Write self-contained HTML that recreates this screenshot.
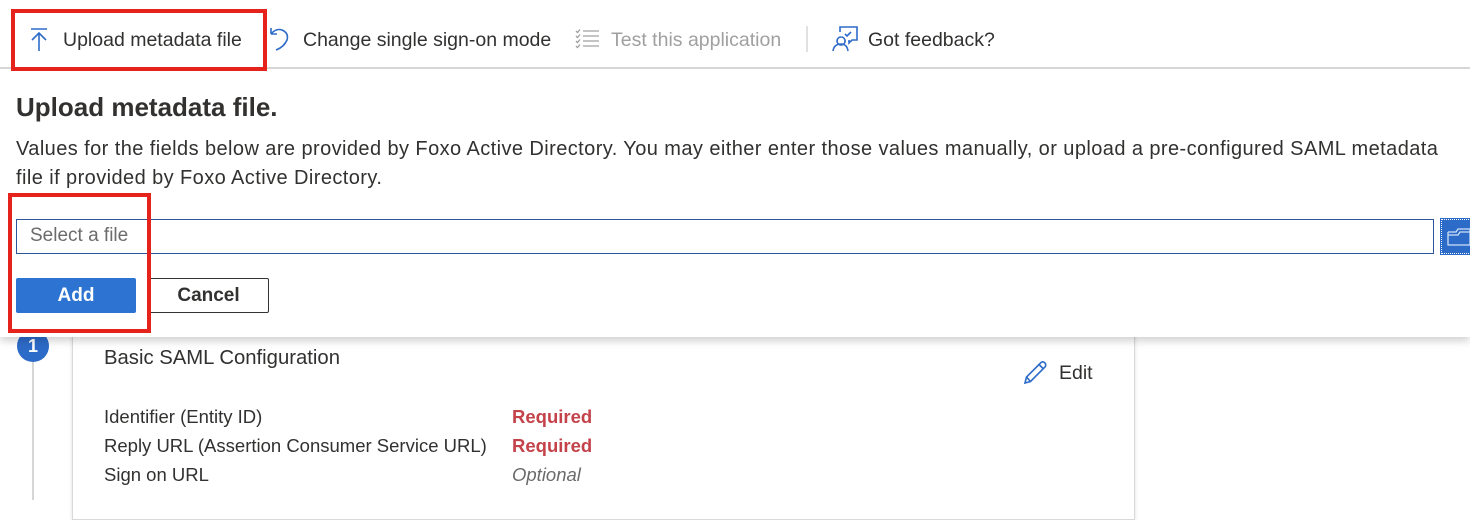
<!DOCTYPE html>
<html><head><style>
*{margin:0;padding:0;box-sizing:border-box}
body{width:1470px;height:495px;overflow:hidden;background:#fff;font-family:"Liberation Sans",sans-serif;color:#323130;position:relative}
.a{position:absolute;white-space:nowrap}
</style></head><body>
<div class="a" style="left:32px;top:330px;width:2px;height:170px;background:#d6d6d6"></div>
<div class="a" style="left:17px;top:330px;width:32px;height:32px;border-radius:50%;background:#2d6bc8;color:#fff;font-weight:bold;font-size:18px;text-align:center;line-height:32px">1</div>
<div class="a" style="left:72px;top:320px;width:1063px;height:200px;border:1px solid #d9d9d9;box-shadow:0 1px 4px rgba(0,0,0,.12);background:#fff"></div>
<div class="a" style="left:104px;top:347px;font-size:20.3px">Basic SAML Configuration</div>
<svg class="a" style="left:1022px;top:360px" width="26" height="26" viewBox="0 0 26 26"><path d="M3 23 L4.5 17 L19 2.5 Q21 1 23 3 Q24.5 5 23 7 L8.5 21.5 Z M4.5 17 L8.5 21.5 M17 4.5 L21 8.5" fill="none" stroke="#2d6bc8" stroke-width="1.6"/></svg>
<div class="a" style="left:1059px;top:362px;font-size:19.5px">Edit</div>
<div class="a" style="left:104px;top:402px;font-size:18.5px;line-height:29px">Identifier (Entity ID)<br>Reply URL (Assertion Consumer Service URL)<br>Sign on URL</div>
<div class="a" style="left:512px;top:402px;font-size:18.5px;line-height:29px;color:#c4434b;font-weight:bold">Required<br>Required</div>
<div class="a" style="left:512px;top:460px;font-size:18.5px;line-height:29px;color:#6b6b6b;font-style:italic">Optional</div>
<div class="a" style="left:0;top:0;width:1470px;height:337px;background:#fff;box-shadow:0 4px 8px rgba(0,0,0,.18)"></div>
<div class="a" style="left:0;top:67px;width:1470px;height:2px;background:#d6d6d6"></div>
<svg class="a" style="left:28px;top:27px" width="22" height="26" viewBox="0 0 22 26"><path d="M3 2H19M11 24V6M4 13L11 6L18 13" fill="none" stroke="#2d6bc8" stroke-width="1.6"/></svg>
<div class="a" style="left:63px;top:29px;font-size:19.5px">Upload metadata file</div>
<svg class="a" style="left:268px;top:26px" width="24" height="26" viewBox="0 0 24 26"><path d="M3 8 Q8 2 14 4 Q21 7 19 14 Q16 21 8 24 M3 8 L3 2 M3 8 L9 8" fill="none" stroke="#2d6bc8" stroke-width="1.6"/></svg>
<div class="a" style="left:303px;top:29px;font-size:19.5px">Change single sign-on mode</div>
<svg class="a" style="left:574px;top:28px" width="26" height="22" viewBox="0 0 26 22"><path d="M9 3H25M9 8H25M9 13H25M9 18H25M2 3L3.5 4.5L6 1.5M2 8L3.5 9.5L6 6.5M2 13L3.5 14.5L6 11.5M2 18L3.5 19.5L6 16.5" fill="none" stroke="#a0a0a0" stroke-width="1.3"/></svg>
<div class="a" style="left:611px;top:29px;font-size:19.5px;color:#a0a0a0">Test this application</div>
<div class="a" style="left:806px;top:26px;width:2px;height:26px;background:#e1e1e1"></div>
<svg class="a" style="left:830px;top:26px" width="28" height="26" viewBox="0 0 28 26"><path d="M10 6V1H27V14H22L19 17V14 M15 8L17 10L21 6 M11 11a4 4 0 1 0 .1 0 M3 25Q4 18 11 18Q17 18 18 25" fill="none" stroke="#2d6bc8" stroke-width="1.6"/></svg>
<div class="a" style="left:868px;top:29px;font-size:19.5px">Got feedback?</div>
<div class="a" style="left:11px;top:9px;width:256px;height:62px;border:4px solid #e5221b"></div>
<div class="a" style="left:16px;top:92px;font-size:26px;font-weight:bold">Upload metadata file.</div>
<div class="a" style="left:16px;top:135px;font-size:20px;letter-spacing:0.42px;line-height:29px;white-space:normal;width:1440px">Values for the fields below are provided by Foxo Active Directory. You may either enter those values manually, or upload a pre-configured SAML metadata file if provided by Foxo Active Directory.</div>
<div class="a" style="left:16px;top:219px;width:1418px;height:35px;border:1px solid #2b579a"></div>
<div class="a" style="left:30px;top:225px;font-size:19px;color:#6b6b6b">Select a file</div>
<div class="a" style="left:1441px;top:219px;width:40px;height:35px;background:#2d6bc8;border:1px dotted #fff;outline:1px solid #2d6bc8"></div>
<svg class="a" style="left:1447px;top:228px" width="23" height="18" viewBox="0 0 23 18"><path d="M1 4H9L11 1H23M1 4V17H23V1M1 7H11L13 4H23" fill="none" stroke="#cfe0f7" stroke-width="1.3"/></svg>
<div class="a" style="left:16px;top:278px;width:120px;height:35px;background:#2d74d2;border-radius:2px;color:#fff;font-weight:bold;font-size:19px;text-align:center;line-height:35px">Add</div>
<div class="a" style="left:148px;top:278px;width:121px;height:35px;border:1px solid #333;border-radius:2px;font-weight:bold;font-size:19px;text-align:center;line-height:33px">Cancel</div>
<div class="a" style="left:8px;top:193px;width:143px;height:140px;border:4px solid #e5221b"></div>
</body></html>
